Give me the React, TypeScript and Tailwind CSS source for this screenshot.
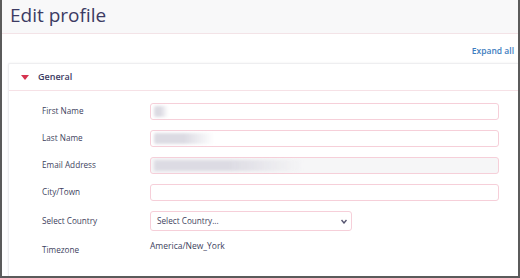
import React from 'react';

const fields = [
  { label: 'First Name', blur: 'w-[14px]', bg: '' },
  { label: 'Last Name', blur: 'w-[60px]', bg: '' },
  { label: 'Email Address', blur: 'w-[150px]', bg: 'bg-[#f6f6f7]' },
  { label: 'City/Town', blur: '', bg: '' },
];

export default function App() {
  return (
    <div
      className="w-[520px] h-[278px] overflow-hidden border-x-2 border-b-2 border-[#5b5b5b] bg-white text-[#403f5e] flex flex-col"
      style={{ fontFamily: '"Open Sans", "Noto Sans", sans-serif' }}
    >
      <div className="h-[34px] shrink-0 bg-[#f8f8f9] border-b border-[#f3e3e7] px-[8px] flex items-center">
        <h1 className="text-[19px] leading-none text-[#3c3b63] pb-[2px]">Edit profile</h1>
      </div>

      <div className="h-[29px] shrink-0 flex items-center justify-end pr-[4px] pt-[5px]">
        <a className="text-[8.5px] font-semibold text-[#3d7dc0]">Expand all</a>
      </div>

      <div className="ml-[6px] flex-1 border-l border-t border-[#eeeef0] shadow-[0_0_2px_rgba(0,0,0,0.08)] rounded-tl-[2px]">
        <div className="h-[27px] flex items-center border-b border-[#f6e1e6] pl-[12px] gap-[9px]">
          <svg width="8" height="5" viewBox="0 0 8 5">
            <path d="M0 0 H8 L4 5 Z" fill="#d6334f" />
          </svg>
          <span className="text-[9px] font-semibold text-[#3c3b63]">General</span>
        </div>

        <div className="pt-[12px] pl-[33px] pr-[19px] grid grid-cols-[108px_1fr] gap-y-[10px] items-center text-[8.2px]">
          {fields.map((f) => (
            <React.Fragment key={f.label}>
              <span>{f.label}</span>
              <div
                className={`h-[17px] rounded-[3px] border border-[#f6cfd9] ${f.bg} flex items-center px-[3px]`}
              >
                {f.blur && (
                  <div
                    className={`h-[11px] ${f.blur} rounded-[2px] bg-gradient-to-r from-[#dcdbe3] via-[#dcdbe3] to-transparent blur-[1.5px]`}
                  />
                )}
              </div>
            </React.Fragment>
          ))}

          <span>Select Country</span>
          <div className="w-[202px] h-[20px] rounded-[3px] border border-[#f6cfd9] flex items-center justify-between pl-[6px] pr-[4px]">
            <span>Select Country...</span>
            <svg width="6" height="5" viewBox="0 0 6 5">
              <path d="M0.5 1 L3 4 L5.5 1" fill="none" stroke="#55546f" strokeWidth="1.4" />
            </svg>
          </div>

          <span className="self-start pt-[3px]">Timezone</span>
          <span className="self-start mt-[-1px] text-[8.5px]">America/New_York</span>
        </div>
      </div>
    </div>
  );
}
